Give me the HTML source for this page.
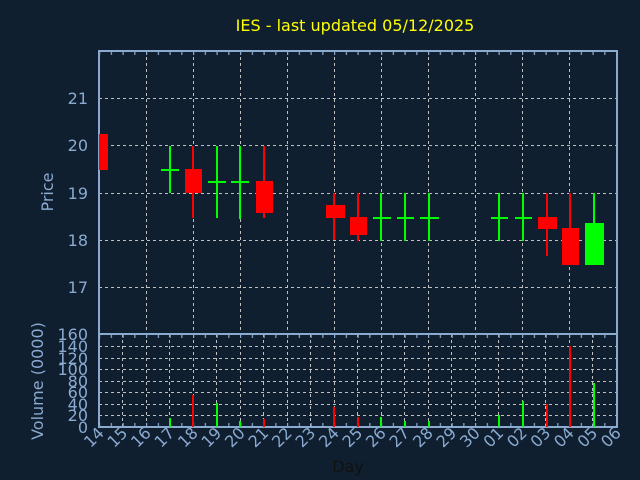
<!DOCTYPE html>
<html><head><meta charset="utf-8"><style>
html,body{margin:0;padding:0;background:#0f1f30;}
svg{display:block}
text{font-family:"DejaVu Sans","Liberation Sans",sans-serif;}
</style></head><body>
<svg width="640" height="480" xmlns="http://www.w3.org/2000/svg">
<defs>
<pattern id="tk" x="99" y="0" width="11.75" height="480" patternUnits="userSpaceOnUse">
<rect x="0" y="0" width="1.2" height="480" fill="#8aaad0"/>
</pattern>
</defs>
<rect width="640" height="480" fill="#0f1f30"/>
<text x="355" y="31" fill="#ffff00" font-size="16" text-anchor="middle">IES - last updated 05/12/2025</text>
<g stroke="#c0c0c0" stroke-dasharray="3,3" stroke-width="1">
<path d="M99 98.5H617M99 145.5H617M99 193.5H617M99 240.5H617M99 287.5H617"/>
<path d="M146.5 51V334M193.5 51V334M240.5 51V334M287.5 51V334M334.5 51V334M381.5 51V334M428.5 51V334M475.5 51V334M522.5 51V334M569.5 51V334"/>
<path d="M99 415.5H617M99 404.5H617M99 392.5H617M99 381.5H617M99 369.5H617M99 358.5H617M99 346.5H617"/>
<path d="M122.5 334V427M146.5 334V427M169.5 334V427M193.5 334V427M216.5 334V427M240.5 334V427M263.5 334V427M287.5 334V427M310.5 334V427M334.5 334V427M357.5 334V427M381.5 334V427M404.5 334V427M428.5 334V427M451.5 334V427M475.5 334V427M498.5 334V427M522.5 334V427M545.5 334V427M569.5 334V427M592.5 334V427"/>
</g>
<!-- ticks -->
<rect x="99" y="51" width="518" height="4" fill="url(#tk)"/>
<rect x="99" y="334" width="518" height="4" fill="url(#tk)"/>
<rect x="99" y="423" width="518" height="4" fill="url(#tk)"/>
<g stroke="#8aaad0" stroke-width="2" fill="none">
<rect x="99" y="51" width="518" height="376"/>
<path d="M99 334H617"/>
</g>
<!-- candles -->
<g stroke-width="2">
<rect x="99" y="134" width="9" height="36" fill="#ff0000"/>
<path d="M170 146V193M161 170H179" stroke="#00ff00"/>
<path d="M193 146V218" stroke="#ff0000"/><rect x="185" y="169" width="17" height="24" fill="#ff0000"/>
<path d="M217 146V218M208 182H226" stroke="#00ff00"/>
<path d="M240 146V219M231 182H249" stroke="#00ff00"/>
<path d="M264 146V218" stroke="#ff0000"/><rect x="256" y="181" width="17" height="32" fill="#ff0000"/>
<path d="M334 193V240" stroke="#ff0000"/><rect x="326" y="205" width="19" height="13" fill="#ff0000"/>
<path d="M358 193V241" stroke="#ff0000"/><rect x="350" y="217" width="17" height="18" fill="#ff0000"/>
<path d="M381 193V241M373 218H391" stroke="#00ff00"/>
<path d="M405 193V241M397 218H414" stroke="#00ff00"/>
<path d="M429 193V241M420 218H439" stroke="#00ff00"/>
<path d="M499 193V241M491 218H508" stroke="#00ff00"/>
<path d="M523 193V241M515 218H532" stroke="#00ff00"/>
<path d="M547 193V256" stroke="#ff0000"/><rect x="538" y="217" width="19" height="12" fill="#ff0000"/>
<path d="M570 193V265" stroke="#ff0000"/><rect x="562" y="228" width="17" height="37" fill="#ff0000"/>
<path d="M594 193V223" stroke="#00ff00"/><rect x="585" y="223" width="19" height="42" fill="#00ff00"/>
</g>
<!-- volume -->
<g stroke-width="2">
<path d="M170 418V427M217 403V427M240 421V427M381 417V427M405 421V427M429 421V427M499 415V427M523 401V427M594 383V427" stroke="#00ff00"/>
<path d="M193 395V427M264 419V427M334 407V427M358 417V427M547 404V427M570 346V427" stroke="#ff0000"/>
</g>
<g fill="#8aaad0" font-size="16" text-anchor="end">
<text x="88" y="104">21</text><text x="88" y="151">20</text><text x="88" y="199">19</text><text x="88" y="246">18</text><text x="88" y="293">17</text>
</g>
<g fill="#8aaad0" font-size="16" text-anchor="end">
<text x="88" y="340">160</text><text x="88" y="352">140</text><text x="88" y="364">120</text><text x="88" y="375">100</text><text x="88" y="387">80</text><text x="88" y="398">60</text><text x="88" y="410">40</text><text x="88" y="421">20</text><text x="88" y="433">0</text>
</g>
<text transform="translate(53,192) rotate(-90)" fill="#8aaad0" font-size="16" text-anchor="middle">Price</text>
<text transform="translate(43,381) rotate(-90)" fill="#8aaad0" font-size="16" text-anchor="middle">Volume (0000)</text>
<g fill="#8aaad0" font-size="16" text-anchor="end">
<text transform="translate(105,434) rotate(-45)">14</text>
<text transform="translate(128.5,434) rotate(-45)">15</text>
<text transform="translate(152,434) rotate(-45)">16</text>
<text transform="translate(175.5,434) rotate(-45)">17</text>
<text transform="translate(199,434) rotate(-45)">18</text>
<text transform="translate(222.5,434) rotate(-45)">19</text>
<text transform="translate(246,434) rotate(-45)">20</text>
<text transform="translate(269.5,434) rotate(-45)">21</text>
<text transform="translate(293,434) rotate(-45)">22</text>
<text transform="translate(316.5,434) rotate(-45)">23</text>
<text transform="translate(340,434) rotate(-45)">24</text>
<text transform="translate(363.5,434) rotate(-45)">25</text>
<text transform="translate(387,434) rotate(-45)">26</text>
<text transform="translate(410.5,434) rotate(-45)">27</text>
<text transform="translate(434,434) rotate(-45)">28</text>
<text transform="translate(457.5,434) rotate(-45)">29</text>
<text transform="translate(481,434) rotate(-45)">30</text>
<text transform="translate(504.5,434) rotate(-45)">01</text>
<text transform="translate(528,434) rotate(-45)">02</text>
<text transform="translate(551.5,434) rotate(-45)">03</text>
<text transform="translate(575,434) rotate(-45)">04</text>
<text transform="translate(598.5,434) rotate(-45)">05</text>
<text transform="translate(622,434) rotate(-45)">06</text>
</g>
<text x="348" y="472" fill="#111" font-size="16" text-anchor="middle">Day</text>
</svg>
</body></html>
